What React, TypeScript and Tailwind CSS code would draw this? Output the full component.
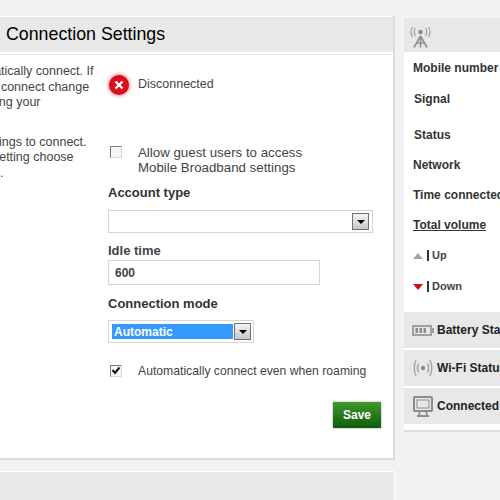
const font = "font-['Liberation_Sans',Arial,sans-serif]";

// the little windows-style arrow button on the select boxes
function SelectArrow() {
  return (
    <div className="flex h-[17px] w-[17px] shrink-0 items-center justify-center border border-[#707070] bg-gradient-to-b from-[#f4f4f4] to-[#c8c8c8]">
      <div className="h-0 w-0 border-x-[4px] border-t-[4px] border-x-transparent border-t-black" />
    </div>
  );
}

function Checkbox({ checked }: { checked?: boolean }) {
  return (
    <div className="flex h-[12px] w-[12px] shrink-0 items-center justify-center border border-[#7a7a7a] border-b-[#d8d8d8] border-r-[#d8d8d8] bg-[#f6f6f6]">
      {checked && (
        <svg viewBox="0 0 10 10" className="h-[10px] w-[10px]">
          <path d="M1.5 4 L4 7 L8.5 1.5" fill="none" stroke="#111" strokeWidth="2" />
        </svg>
      )}
    </div>
  );
}

function TowerIcon() {
  return (
    <svg viewBox="0 0 21 22" className="h-[22px] w-[21px]" fill="none" stroke="#a8a8a8">
      <circle cx="10.5" cy="6" r="2.2" fill="#8a8a8a" stroke="none" />
      <path d="M5.5 2 Q3 6 5.5 10 M15.5 2 Q18 6 15.5 10" strokeWidth="1.4" />
      <path d="M2.5 1 Q-0.5 6 2.5 11 M18.5 1 Q21.5 6 18.5 11" strokeWidth="1.3" />
      <path d="M10.5 10 L4 21.5 M10.5 10 L17 21.5 M6 17 H15 M10.5 12 V21.5" stroke="#909090" strokeWidth="1.6" />
    </svg>
  );
}

function BatteryIcon() {
  return (
    <svg viewBox="0 0 22 11" className="h-[11px] w-[22px]">
      <rect x="0" y="0" width="20" height="11" fill="#a0a0a0" />
      <rect x="2" y="2" width="16" height="7" fill="#e8e8e8" />
      <rect x="20" y="3" width="2" height="5" fill="#a0a0a0" />
      <path d="M3.5 3h2.5v5H3.5zM7.5 3h2.5v5H7.5zM11.5 3h2.5v5H11.5z" fill="#8c8c8c" />
    </svg>
  );
}

function WifiIcon() {
  return (
    <svg viewBox="0 0 20 18" className="h-[18px] w-[20px]" fill="none" stroke="#a8a8a8">
      <circle cx="10" cy="9" r="2.2" fill="#8a8a8a" stroke="none" />
      <path d="M5.5 4.5 Q3.5 9 5.5 13.5 M14.5 4.5 Q16.5 9 14.5 13.5" strokeWidth="1.5" />
      <path d="M3 1 Q-0.5 9 3 17 M17 1 Q20.5 9 17 17" strokeWidth="1.5" />
    </svg>
  );
}

function MonitorIcon() {
  return (
    <svg viewBox="0 0 20 21" className="h-[21px] w-[20px]" fill="none" stroke="#8c8c8c">
      <rect x="1" y="1" width="18" height="14" rx="1" strokeWidth="2" />
      <rect x="4" y="4" width="12" height="8" strokeWidth="1" />
      <path d="M7 15 L6 19 M13 15 L14 19" strokeWidth="1.6" />
      <path d="M4 20 H16" strokeWidth="2" />
    </svg>
  );
}

function StatRow({ label, className }: { label: string; className: string }) {
  return <div className={`flex items-center text-[12px] font-bold text-[#333] ${className}`}>{label}</div>;
}

function StatusBar({ icon, label }: { icon: React.ReactNode; label: string }) {
  return (
    <div className="flex h-[36px] items-center whitespace-nowrap bg-[#e8e8e8] text-[12px] font-bold text-[#222]">
      <div className="flex w-[33px] shrink-0 justify-center pl-[5px]">{icon}</div>
      <span>{label}</span>
    </div>
  );
}

export default function App() {
  return (
    <div className={`${font} h-[500px] w-[500px] overflow-hidden bg-[#f2f2f2] text-[12px] text-[#444]`}>
      <div className="-ml-[100px] flex w-[700px] items-start pt-[16px]">
        {/* main column */}
        <div className="w-[495px] shrink-0">
          <div className="h-[444px] border-b-[2px] border-r-[2px] border-b-[#dcdcdc] border-r-[#dcdcdc] bg-white">
            <div className="h-[39px] border-b-[1px] border-b-[#e8e8e8] pb-[2px] pt-[1px]">
              <div className="flex h-[35px] items-center bg-[#e8e8e8] pl-[106px] text-[17.8px] text-black">
                Connection Settings
              </div>
            </div>

            <div className="flex">
              <div className="w-[208px] shrink-0 pl-[58px] pt-[9px] text-[12.5px] leading-[15.5px] whitespace-nowrap text-[#444]">
                <p>Automatically connect. If</p>
                <p className="pl-[29px]">to connect change</p>
                <p className="pl-[20px]">during your</p>
                <p className="mt-[24px]">the settings to connect.</p>
                <p className="pl-[12px]">this setting choose</p>
                <p className="pl-[42px]">.</p>
              </div>

              <div className="flex-1 pr-[12px]">
                <div className="flex h-[47px] items-center pt-[12px]">
                  <div className="ml-[1px] flex h-[20px] w-[20px] items-center justify-center rounded-full bg-[#d90f1e] shadow-[0_0_4px_#e04050]">
                    <svg viewBox="0 0 10 10" className="h-[10px] w-[10px]">
                      <path d="M1.5 1.5 L8.5 8.5 M8.5 1.5 L1.5 8.5" stroke="#fff" strokeWidth="2.4" />
                    </svg>
                  </div>
                  <span className="ml-[9px] text-[12.5px]">Disconnected</span>
                </div>

                <div className="mt-[43px] flex">
                  <div className="ml-[2px] mt-[1px] w-[28px] shrink-0">
                    <Checkbox />
                  </div>
                  <div className="text-[13.3px] leading-[15px]">
                    <p>Allow guest users to access</p>
                    <p>Mobile Broadband settings</p>
                  </div>
                </div>

                <div className="mt-[10px] text-[13px] font-bold leading-[16px] text-[#333]">Account type</div>
                <div className="mt-[9px] flex h-[23px] w-[265px] items-center justify-end border border-[#d6d6d6] bg-white pr-[3px]">
                  <SelectArrow />
                </div>

                <div className="mt-[10px] text-[13px] font-bold leading-[16px] text-[#444]">Idle time</div>
                <div className="mt-[1px] flex h-[25px] w-[212px] items-center border border-[#d6d6d6] bg-white pl-[6px] font-bold text-[#444]">
                  600
                </div>

                <div className="mt-[11px] text-[13px] font-bold leading-[16px] text-[#333]">Connection mode</div>
                <div className="mt-[8px] flex h-[23px] w-[146px] items-center gap-[1px] border border-[#d6d6d6] bg-white pl-[3px]">
                  <div className="flex h-[15px] w-[121px] items-center bg-[#3399ff] pl-[2px] font-bold text-white">
                    Automatic
                  </div>
                  <SelectArrow />
                </div>

                <div className="mt-[19px] flex items-center">
                  <div className="ml-[2px] w-[28px] shrink-0">
                    <Checkbox checked />
                  </div>
                  <span className="text-[12.2px]">Automatically connect even when roaming</span>
                </div>

                <div className="mt-[22px] flex justify-end">
                  <div className="flex h-[26px] w-[48px] items-center justify-center bg-gradient-to-b from-[#3f9a2c] to-[#0d5c0c] font-bold text-white shadow-[0_0_2px_#999]">
                    Save
                  </div>
                </div>
              </div>
            </div>
          </div>

          <div className="mt-[11px] h-[40px] border border-white bg-[#e9e9e9]" />
        </div>

        {/* right column */}
        <div className="ml-[9px] mt-[2px] w-[190px] shrink-0 border-b-[2px] border-b-[#dcdcdc] bg-white pb-[6px]">
          <div className="flex h-[34px] items-center bg-[#e8e8e8] pl-[6px] pt-[4px]">
            <TowerIcon />
          </div>
          <div className="pl-[9px]">
            <StatRow label="Mobile number" className="h-[32px]" />
            <StatRow label="Signal" className="h-[30px] pl-[1px]" />
            <StatRow label="Status" className="h-[42px] pl-[1px]" />
            <StatRow label="Network" className="h-[18px]" />
            <StatRow label="Time connected" className="h-[41px]" />
            <StatRow label="Total volume" className="h-[20px] underline" />
            <div className="flex h-[41px] items-center text-[11px] font-bold text-[#444]">
              <div className="mr-[4px] h-0 w-0 border-x-[5px] border-b-[6px] border-x-transparent border-b-[#a5a5a5]" />
              <span className="mr-[3px] h-[11px] border-l-[2px] border-l-[#333]" />
              Up
            </div>
            <div className="flex h-[21px] items-center text-[11px] font-bold text-[#444]">
              <div className="mr-[4px] h-0 w-0 border-x-[5px] border-t-[6px] border-x-transparent border-t-[#cc0f1c]" />
              <span className="mr-[3px] h-[11px] border-l-[2px] border-l-[#333]" />
              Down
            </div>
          </div>
          <div className="mt-[15px] flex flex-col gap-[2px]">
            <StatusBar icon={<BatteryIcon />} label="Battery Status" />
            <StatusBar icon={<WifiIcon />} label="Wi-Fi Status" />
            <StatusBar icon={<MonitorIcon />} label="Connected devices" />
          </div>
        </div>
      </div>
    </div>
  );
}
